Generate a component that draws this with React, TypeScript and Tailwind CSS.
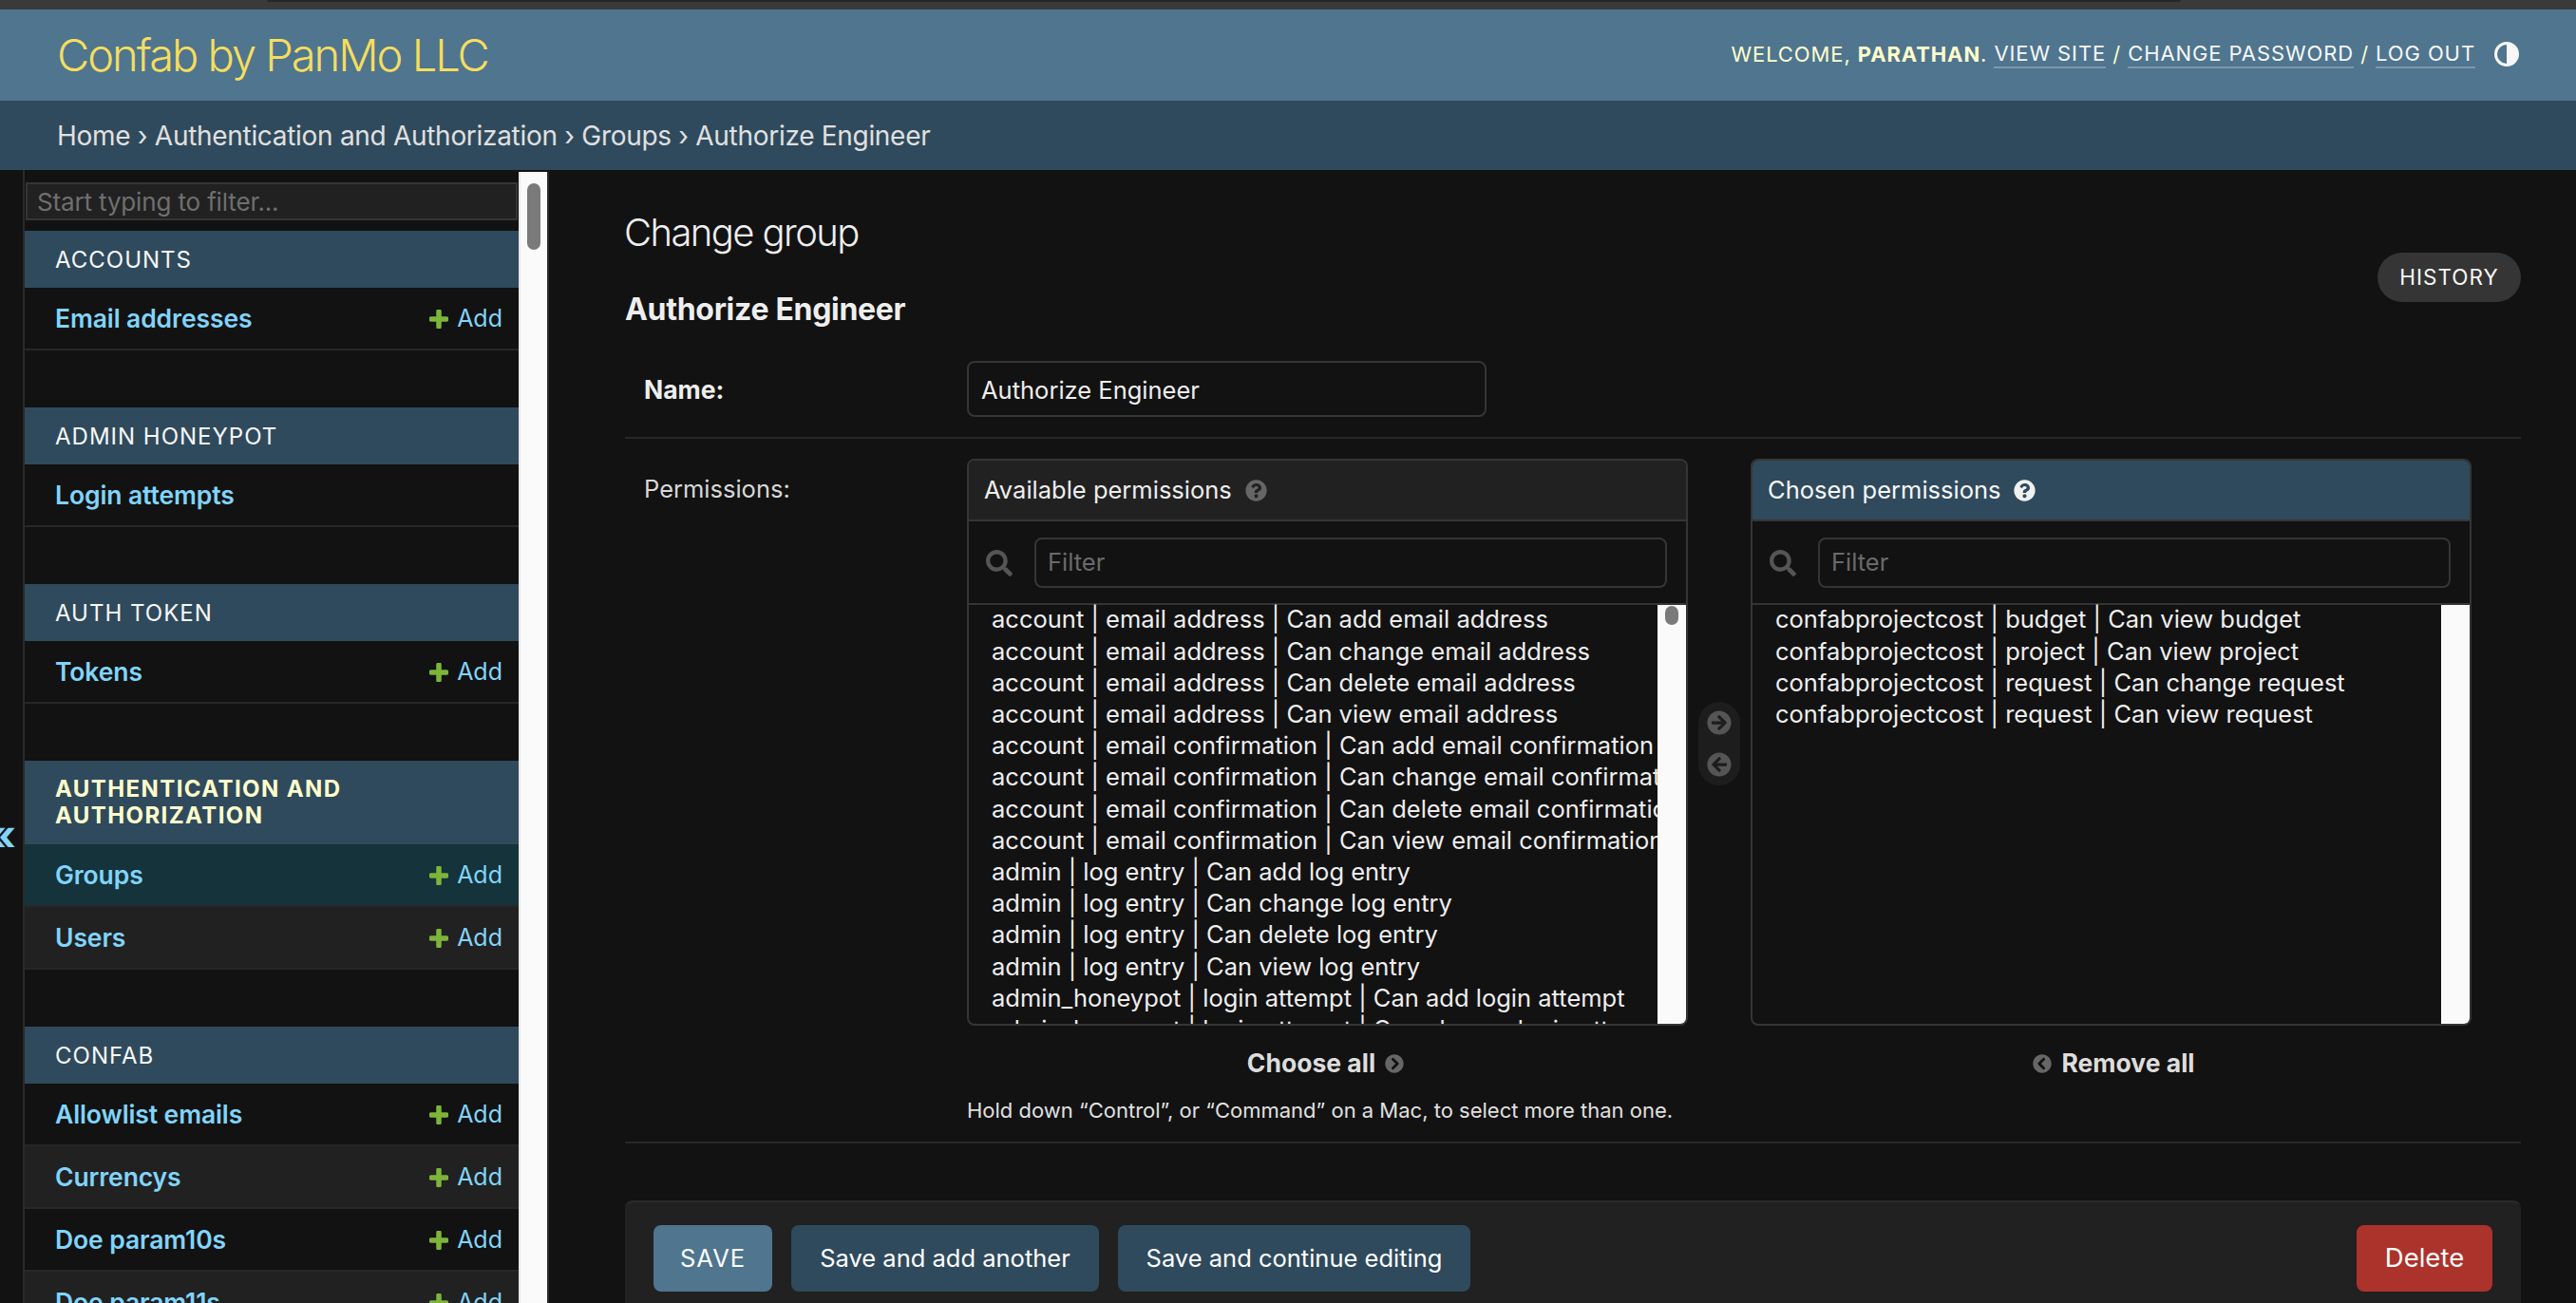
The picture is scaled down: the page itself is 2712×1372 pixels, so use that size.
import React from "react";
import { FaArrowCircleRight, FaArrowCircleLeft, FaChevronCircleRight, FaChevronCircleLeft, FaQuestionCircle, FaSearch } from "react-icons/fa";

type Model = { name: string; add: boolean; selected?: boolean };
type Section = { title: string; active?: boolean; models: Model[] };

const sections: Section[] = [
  { title: "Accounts", models: [{ name: "Email addresses", add: true }] },
  { title: "Admin Honeypot", models: [{ name: "Login attempts", add: false }] },
  { title: "Auth Token", models: [{ name: "Tokens", add: true }] },
  {
    title: "Authentication and Authorization",
    active: true,
    models: [
      { name: "Groups", add: true, selected: true },
      { name: "Users", add: true },
    ],
  },
  {
    title: "Confab",
    models: [
      { name: "Allowlist emails", add: true },
      { name: "Currencys", add: true },
      { name: "Doe param10s", add: true },
      { name: "Doe param11s", add: true },
    ],
  },
];

const available = [
  "account | email address | Can add email address",
  "account | email address | Can change email address",
  "account | email address | Can delete email address",
  "account | email address | Can view email address",
  "account | email confirmation | Can add email confirmation",
  "account | email confirmation | Can change email confirmation",
  "account | email confirmation | Can delete email confirmation",
  "account | email confirmation | Can view email confirmation",
  "admin | log entry | Can add log entry",
  "admin | log entry | Can change log entry",
  "admin | log entry | Can delete log entry",
  "admin | log entry | Can view log entry",
  "admin_honeypot | login attempt | Can add login attempt",
  "admin_honeypot | login attempt | Can change login attempt",
];

const chosen = [
  "confabprojectcost | budget | Can view budget",
  "confabprojectcost | project | Can view project",
  "confabprojectcost | request | Can change request",
  "confabprojectcost | request | Can view request",
];

function Plus() {
  return (
    <svg viewBox="0 0 20 20" className="w-[20px] h-[20px] shrink-0">
      <path d="M10 2v16M2 10h16" stroke="#7cb53a" strokeWidth="5.5" strokeLinecap="round" fill="none" />
    </svg>
  );
}

function SelectorBox({ title, items, chosenBox }: { title: string; items: string[]; chosenBox?: boolean }) {
  return (
    <div className="w-[759px] h-[597px] border-2 border-[#353535] rounded-[8px] overflow-hidden flex flex-col shrink-0">
      <div
        className={
          chosenBox
            ? "h-[64px] shrink-0 bg-[#2f4a5c] border-b-2 border-[#353535] flex items-center pl-[16px] gap-[14px] text-[#f7f7f7] text-[25.5px]"
            : "h-[64px] shrink-0 bg-[#212121] border-b-2 border-[#353535] flex items-center pl-[16px] gap-[14px] text-[#eeeeee] text-[25.5px]"
        }
      >
        <span>{title}</span>
        <FaQuestionCircle className={chosenBox ? "w-[23px] h-[23px] text-[#f0f0f0]" : "w-[23px] h-[23px] text-[#666666]"} />
      </div>
      <div className="h-[88px] shrink-0 border-b-2 border-[#353535] flex items-center pl-[18px] pr-[20px] gap-[23px]">
        <FaSearch className="w-[28px] h-[28px] text-[#555555] shrink-0 mt-[2px]" />
        <div className="flex-1 h-[53px] border-2 border-[#353535] rounded-[8px] flex items-center pl-[12px] text-[25.5px] text-[#6a6a6a]">
          Filter
        </div>
      </div>
      <div className="flex-1 flex min-h-0">
        <div className="flex-1 min-w-0 overflow-hidden pl-[24px] -mt-[1px]">
          {items.map((t) => (
            <div key={t} className="h-[33.2px] flex items-center whitespace-nowrap text-[25.5px] text-[#eeeeee]">
              {t}
            </div>
          ))}
        </div>
        <div className="w-[30px] shrink-0 bg-[#fafafa] flex justify-center pt-[1px]">
          {!chosenBox && <div className="w-[14px] h-[20px] rounded-full bg-[#7a7a7a]" />}
        </div>
      </div>
    </div>
  );
}

export default function App() {
  return (
    <div
      className="w-[2712px] h-[1372px] overflow-hidden bg-[#121212] flex flex-col text-[#eeeeee] antialiased"
      style={{ fontFamily: "Inter, 'Noto Sans', sans-serif" }}
    >
      {/* window strip */}
      <div className="h-[10px] shrink-0 bg-[#3a3a3a]">
        <div className="ml-[281px] w-[2015px] h-[2px] bg-[#262626] rounded-b-[2px]" />
      </div>

      {/* header */}
      <header className="h-[96px] shrink-0 bg-[#4f758f] flex items-center justify-between pl-[60px] pr-[60px]">
        <div className="text-[47px] font-light text-[#f5dd5d] tracking-[-2px]">Confab by PanMo LLC</div>
        <div className="flex items-center gap-[20px] text-[22px] leading-[27px] tracking-[0.9px] text-[#ffffcc] mb-[2px]">
          <div className="flex items-center whitespace-pre">
            <span>WELCOME, </span>
            <strong className="font-bold">PARATHAN</strong>
            <span>. </span>
            <span className="text-[#f7f7f7] border-b-2 border-[#8098ab]">VIEW SITE</span>
            <span> / </span>
            <span className="text-[#f7f7f7] border-b-2 border-[#8098ab]">CHANGE PASSWORD</span>
            <span> / </span>
            <span className="text-[#f7f7f7] border-b-2 border-[#8098ab]">LOG OUT</span>
          </div>
          <svg viewBox="0 0 26 26" className="w-[26px] h-[26px]">
            <circle cx="13" cy="13" r="11.5" fill="none" stroke="#f7f7f7" strokeWidth="3" />
            <path d="M13 1.5a11.5 11.5 0 0 1 0 23z" fill="#f7f7f7" />
          </svg>
        </div>
      </header>

      {/* breadcrumbs */}
      <nav className="h-[73px] shrink-0 bg-[#2f4a5c] flex items-center pl-[60px] text-[28px] tracking-[-0.3px] text-[#e0e0e0] whitespace-pre">
        Home › Authentication and Authorization › Groups › Authorize Engineer
      </nav>

      <div className="flex-1 flex min-h-0">
        {/* collapse toggle */}
        <div className="relative w-[26px] shrink-0 border-r-2 border-[#2a2a2a] overflow-hidden">
          <span className="absolute left-[-12px] top-[678px] text-[44px] leading-[44px] font-bold text-[#81d4fa]">«</span>
        </div>

        {/* sidebar */}
        <aside className="w-[520px] shrink-0 overflow-hidden">
          <div className="mt-[13px] mx-[1px] h-[40px] bg-[#212121] border-2 border-[#353535] flex items-center pl-[10px] text-[26px] tracking-[-0.15px] text-[#6f6f6f]">
            Start typing to filter...
          </div>
          <div className="mt-[11px]">
            {sections.map((s) => (
              <section key={s.title} className="mb-[60px]">
                <div
                  className={
                    s.active
                      ? "bg-[#2f4a5c] pl-[32px] pr-[20px] py-[16px] text-[24px] leading-[28px] tracking-[1.4px] uppercase font-bold text-[#ffffcc]"
                      : "bg-[#2f4a5c] pl-[32px] pr-[20px] pt-[2px] h-[60px] flex items-center text-[24px] tracking-[1px] uppercase text-[#f7f7f7]"
                  }
                >
                  {s.title}
                </div>
                {s.models.map((m, i) => (
                  <div
                    key={m.name}
                    className={
                      m.selected
                        ? "h-[66px] flex items-center justify-between pl-[32px] pr-[17px] pt-[2px] border-b-2 border-[#272727] bg-[#14333a]"
                        : i % 2 === 1
                          ? "h-[66px] flex items-center justify-between pl-[32px] pr-[17px] pt-[2px] border-b-2 border-[#272727] bg-[#212121]"
                          : "h-[66px] flex items-center justify-between pl-[32px] pr-[17px] pt-[2px] border-b-2 border-[#272727] bg-[#121212]"
                    }
                  >
                    <span className="text-[26.5px] tracking-[-0.1px] font-semibold text-[#81d4fa]">{m.name}</span>
                    {m.add && (
                      <span className="flex items-center gap-[9px] text-[25px] text-[#81d4fa]">
                        <Plus />
                        Add
                      </span>
                    )}
                  </div>
                ))}
              </section>
            ))}
          </div>
        </aside>

        {/* sidebar scrollbar */}
        <div className="w-[32px] shrink-0 mt-[2px] bg-[#fafafa] border-l-2 border-r-2 border-l-[#e8e8e8] border-r-[#2a2a2a] flex justify-center pt-[12px]">
          <div className="w-[14px] h-[70px] rounded-full bg-[#7a7a7a]" />
        </div>

        {/* main */}
        <main className="flex-1 min-w-0 pl-[80px] pr-[58px] flex flex-col">
          <div className="flex justify-between pt-[38px] shrink-0">
            <div>
              <h1 className="h-[56px] -ml-[1px] flex items-center text-[40px] font-light tracking-[-1.6px] text-[#eeeeee]">Change group</h1>
              <h2 className="mt-[31px] h-[44px] flex items-center text-[32px] tracking-[-0.3px] font-bold text-[#eeeeee]">Authorize Engineer</h2>
            </div>
            <div className="mt-[49px] h-[52px] w-[151px] rounded-full bg-[#353535] flex items-center justify-center text-[22.5px] tracking-[1px] text-[#f7f7f7]">
              HISTORY
            </div>
          </div>

          <div className="mt-[32px] pb-[21px] border-b-2 border-[#272727] flex shrink-0">
            <div className="w-[360px] pl-[20px] pt-[3px] flex items-center text-[26.5px] font-bold">Name:</div>
            <div className="w-[547px] h-[59px] border-2 border-[#353535] rounded-[8px] flex items-center pl-[13px] pt-[3px] text-[25.5px]">
              Authorize Engineer
            </div>
          </div>

          <div className="pt-[21px] pb-[18px] border-b-2 border-[#272727] flex shrink-0">
            <div className="w-[360px] pl-[20px] pt-[13px] text-[25.5px] text-[#d8d8d8]">Permissions:</div>
            <div>
              <div className="flex">
                <SelectorBox title="Available permissions" items={available} />
                <div className="w-[66px] shrink-0 flex justify-center pt-[256px]">
                  <div className="w-[44px] h-[88px] rounded-full bg-[#1d1d1d] flex flex-col items-center justify-center gap-[18px]">
                    <FaArrowCircleRight className="w-[26px] h-[26px] text-[#555555]" />
                    <FaArrowCircleLeft className="w-[26px] h-[26px] text-[#555555]" />
                  </div>
                </div>
                <SelectorBox title="Chosen permissions" items={chosen} chosenBox />
              </div>
              <div className="flex mt-[20px] text-[26.5px] font-bold text-[#dddddd]">
                <div className="w-[759px] h-[40px] flex items-center justify-center gap-[10px] pr-[4px]">
                  Choose all
                  <FaChevronCircleRight className="w-[20px] h-[20px] text-[#666666]" />
                </div>
                <div className="w-[66px]" />
                <div className="w-[759px] h-[40px] flex items-center justify-center gap-[10px] pl-[6px]">
                  <FaChevronCircleLeft className="w-[20px] h-[20px] text-[#666666]" />
                  Remove all
                </div>
              </div>
              <p className="mt-[14px] h-[30px] flex items-center text-[22px] text-[#e0e0e0]">
                Hold down “Control”, or “Command” on a Mac, to select more than one.
              </p>
            </div>
          </div>

          <div className="mt-[60px] flex-1 bg-[#212121] border-t-2 border-[#2a2a2a] rounded-t-[8px] px-[30px] pt-[24px] flex justify-between items-start">
            <div className="flex gap-[20px] text-[25.5px] text-white">
              <div className="w-[125px] h-[70px] rounded-[8px] bg-[#4f758f] flex items-center justify-center tracking-[1px]">SAVE</div>
              <div className="w-[324px] h-[70px] rounded-[8px] bg-[#2f4a5c] flex items-center justify-center">Save and add another</div>
              <div className="w-[371px] h-[70px] rounded-[8px] bg-[#2f4a5c] flex items-center justify-center">Save and continue editing</div>
            </div>
            <div className="w-[143px] h-[70px] rounded-[8px] bg-[#ab332c] flex items-center justify-center text-[27.5px] text-white">Delete</div>
          </div>
        </main>
      </div>
    </div>
  );
}
